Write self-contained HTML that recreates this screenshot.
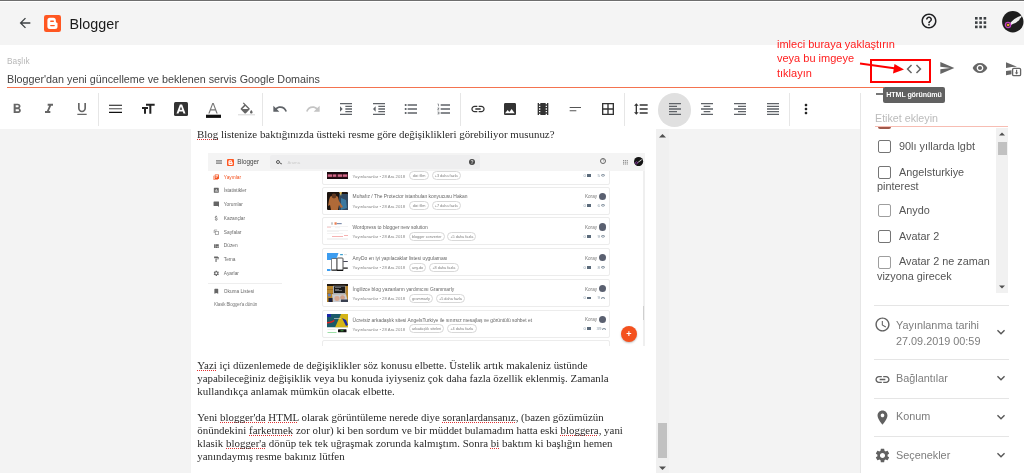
<!DOCTYPE html>
<html><head><meta charset="utf-8">
<style>
*{margin:0;padding:0;box-sizing:border-box}
html,body{width:1024px;height:473px;overflow:hidden;background:#fff;font-family:"Liberation Sans",sans-serif;position:relative}
.a{position:absolute}
svg{display:block;position:absolute}
.ic{fill:#616161}
.t{white-space:nowrap;position:absolute}
</style></head><body><div id="root" style="position:absolute;left:0;top:0;width:1024px;height:473px;will-change:transform">
<!-- top border -->
<div class="a" style="left:0;top:0;width:1024px;height:1px;background:#6e6e6e"></div>
<div class="a" style="left:0;top:1px;width:1024px;height:1px;background:#fff"></div>
<!-- header -->
<div class="a" style="left:0;top:2px;width:1024px;height:42.5px;background:#f4f4f4"></div>
<svg style="left:17px;top:14.5px" width="16" height="16" viewBox="0 0 24 24"><path fill="#3c4043" d="M20 11H7.83l5.59-5.59L12 4l-8 8 8 8 1.41-1.41L7.83 13H20v-2z"/></svg>
<svg style="left:44.3px;top:14.8px" width="17" height="17" viewBox="0 0 17 17"><rect width="17" height="17" rx="2.2" fill="#ff5722"/><path fill="#fff" d="M5.9 2.8H9.3a2.5 2.5 0 0 1 2.5 2.5V6.3a1.7 1.7 0 0 0 1.7 1.7V11.5a2.5 2.5 0 0 1 -2.5 2.5H5.9a2.5 2.5 0 0 1 -2.5 -2.5V5.3a2.5 2.5 0 0 1 2.5 -2.5z"/><rect x="6.1" y="5.5" width="3.9" height="1.4" rx=".7" fill="#ff5722"/><rect x="6.1" y="9.9" width="4.8" height="1.4" rx=".7" fill="#ff5722"/></svg>
<div class="t" style="left:69.5px;top:13.6px;font-size:14.35px;color:#1a1a1a;line-height:20px">Blogger</div>
<svg style="left:920px;top:11.5px" width="18" height="18" viewBox="0 0 24 24"><path fill="#202124" d="M11 18h2v-2h-2v2zm1-16C6.48 2 2 6.48 2 12s4.48 10 10 10 10-4.48 10-10S17.52 2 12 2zm0 18c-4.41 0-8-3.59-8-8s3.59-8 8-8 8 3.590 8 8-3.59 8-8 8zm0-14c-2.21 0-4 1.79-4 4h2c0-1.1.9-2 2-2s2 .9 2 2c0 2-3 1.75-3 5h2c0-2.25 3-2.5 3-5 0-2.21-1.79-4-4-4z"/></svg>
<svg style="left:974.5px;top:17px" width="12" height="12" viewBox="0 0 12 12"><g fill="#3c4043"><rect x="0" y="0" width="2.6" height="2.6"/><rect x="4.3" y="0" width="2.6" height="2.6"/><rect x="8.6" y="0" width="2.6" height="2.6"/><rect x="0" y="4.3" width="2.6" height="2.6"/><rect x="4.3" y="4.3" width="2.6" height="2.6"/><rect x="8.6" y="4.3" width="2.6" height="2.6"/><rect x="0" y="8.6" width="2.6" height="2.6"/><rect x="4.3" y="8.6" width="2.6" height="2.6"/><rect x="8.6" y="8.6" width="2.6" height="2.6"/></g></svg>
<svg style="left:1002px;top:11.3px" width="22" height="22" viewBox="0 0 22 22"><circle cx="10.8" cy="10.7" r="10.7" fill="#1e1e1e"/><path fill="#eee" d="M7.5 13C10 9.5 14 6 20 4.2 19.5 6 18.8 7 17.5 8 18 8.5 17 9.5 15.5 10.3 15.5 11 14 11.8 12 12.5 10.5 13.2 9 14 8.3 14.8z"/><circle cx="6" cy="14" r="2.6" fill="none" stroke="#c040c0" stroke-width="1.3"/><circle cx="6" cy="14" r="1.3" fill="#f0c020"/><circle cx="5.8" cy="14" r=".6" fill="#e02020"/></svg>
<!-- title -->
<div class="t" style="left:7px;top:55.5px;font-size:8.3px;color:#b8b8b8">Başlık</div>
<div class="t" style="left:7px;top:72.8px;font-size:10.75px;color:#444">Blogger'dan yeni güncelleme ve beklenen servis Google Domains</div>
<div class="a" style="left:7px;top:87px;width:877px;height:1px;background:#f4734f"></div>

<!-- toolbar -->
<svg style="left:8.5px;top:101px" width="16" height="16" viewBox="0 0 24 24"><path fill="#666" d="M15.6 10.79c.97-.67 1.65-1.77 1.65-2.79 0-2.26-1.75-4-4-4H7v14h7.04c2.09 0 3.71-1.7 3.71-3.79 0-1.52-.86-2.82-2.15-3.42zM10 6.5h3c.83 0 1.5.67 1.5 1.5s-.67 1.5-1.5 1.5h-3v-3zm3.5 9H10v-3h3.5c.83 0 1.5.67 1.5 1.5s-.67 1.5-1.5 1.5z"/></svg>
<svg style="left:41px;top:101px" width="16" height="16" viewBox="0 0 24 24"><path fill="#666" d="M10 4v3h2.21l-3.42 8H6v3h8v-3h-2.21l3.42-8H18V4z"/></svg>
<svg style="left:74px;top:101px" width="16" height="16" viewBox="0 0 24 24"><path fill="#666" d="M12 17c3.31 0 6-2.69 6-6V3h-2.5v8c0 1.93-1.57 3.5-3.5 3.5S8.5 12.93 8.5 11V3H6v8c0 3.31 2.69 6 6 6zm-7 2v2h14v-2H5z"/></svg>
<div class="a" style="left:98px;top:93px;width:1px;height:33px;background:#e6e6e6"></div>
<svg style="left:104px;top:101px" width="24" height="16" viewBox="0 0 24 16"><path fill="#111" d="M5 3.7h13v1.1H5zM5 10.8h13v1.1H5z"/><path fill="#555" d="M5 7.2h13v1.1H5z"/></svg>
<svg style="left:139.5px;top:101px" width="16" height="16" viewBox="0 0 24 24"><path fill="#222" d="M9 4v3h5v12h3V7h5V4H9zm-6 8h3v7h3v-7h3V9H3v3z"/></svg>
<div class="a" style="left:174px;top:102px;width:14px;height:14px;background:#333;border-radius:1.5px"></div>
<svg style="left:174px;top:102px" width="14" height="14" viewBox="0 0 14 14"><path fill="#fff" d="M5.9 2.5h2.2l3.4 9h-2l-.7-2H5.2l-.7 2h-2zM5.8 7.8h2.4L7 4.4z"/></svg>
<svg style="left:205px;top:101px" width="16" height="18" viewBox="0 0 16 18"><path fill="#777" d="M7.3 2h1.4l4 10.5h-1.3l-1.1-3H5.7l-1.1 3H3.3zM6.1 8.3h3.8L8 3.3z"/><rect x="1" y="13.7" width="15" height="3.2" fill="#111"/></svg>
<svg style="left:238px;top:100px" width="18" height="18" viewBox="0 0 18 18"><path fill="#666" d="M11.5 8.2L5.7 2.4l-.9.9 1.5 1.5-3.4 3.4c-.4.4-.4 1 0 1.4l3.6 3.6c.2.2.4.3.7.3s.5-.1.7-.3l3.6-3.6c.4-.4.4-1 0-1.4zM4.3 8.9L7.3 5.9l3 3z"/><path fill="#666" d="M13.3 10s-1.3 1.4-1.3 2.3c0 .7.6 1.3 1.3 1.3s1.3-.6 1.3-1.3c0-.9-1.3-2.3-1.3-2.3z"/><rect x="0" y="14.3" width="17" height="1" fill="#d6d6d6"/></svg>
<div class="a" style="left:262px;top:93px;width:1px;height:33px;background:#e6e6e6"></div>
<svg style="left:272px;top:101px" width="16" height="16" viewBox="0 0 24 24"><path fill="#5f6368" d="M12.5 8c-2.65 0-5.05.99-6.9 2.6L2 7v9h9l-3.62-3.62c1.39-1.16 3.16-1.88 5.12-1.88 3.54 0 6.55 2.31 7.6 5.5l2.370-.78C21.08 11.03 17.15 8 12.5 8z"/></svg>
<svg style="left:304.5px;top:101px" width="16" height="16" viewBox="0 0 24 24"><path fill="#c4c4c4" d="M18.4 10.6C16.55 8.99 14.15 8 11.5 8c-4.65 0-8.58 3.03-9.960 7.22L3.9 16c1.05-3.19 4.05-5.5 7.6-5.5 1.95 0 3.73.72 5.12 1.88L13 16h9V7l-3.6 3.6z"/></svg>
<svg style="left:337.5px;top:101px" width="16" height="16" viewBox="0 0 24 24"><path fill="#5f6368" d="M3 21h18v-2H3v2zM3 8v8l4-4-4-4zm8 9h10v-2H11v2zM3 3v2h18V3H3zm8 6h10V7H11v2zm0 4h10v-2H11v2z"/></svg>
<svg style="left:370.5px;top:101px" width="16" height="16" viewBox="0 0 24 24"><path fill="#5f6368" d="M11 17h10v-2H11v2zm-8-5l4 4V8l-4 4zm0 9h18v-2H3v2zM3 3v2h18V3H3zm8 6h10V7H11v2zm0 4h10v-2H11v2z"/></svg>
<svg style="left:403px;top:101px" width="16" height="16" viewBox="0 0 24 24"><path fill="#5f6368" d="M4 10.5c-.83 0-1.5.67-1.5 1.5s.67 1.5 1.5 1.5 1.5-.67 1.5-1.5-.67-1.5-1.5-1.5zm0-6c-.83 0-1.5.67-1.5 1.5S3.17 7.5 4 7.5 5.5 6.830 5.5 6 4.83 4.5 4 4.5zm0 12c-.83 0-1.5.68-1.5 1.5s.68 1.5 1.5 1.5 1.5-.68 1.5-1.5-.67-1.5-1.5-1.5zM7 19h14v-2H7v2zm0-6h14v-2H7v2zm0-8v2h14V5H7z"/></svg>
<svg style="left:435.5px;top:101px" width="16" height="16" viewBox="0 0 24 24"><path fill="#5f6368" d="M2 17h2v.5H3v1h1v.5H2v1h3v-4H2v1zm1-9h1V4H2v1h1v3zm-1 3h1.8L2 13.1v.9h3v-1H3.2L5 10.9V10H2v1zm5-6v2h14V5H7zm0 14h14v-2H7v2zm0-6h14v-2H7v2z"/></svg>
<div class="a" style="left:460px;top:93px;width:1px;height:33px;background:#e6e6e6"></div>
<svg style="left:469.5px;top:101px" width="16" height="16" viewBox="0 0 24 24"><path fill="#333" d="M3.9 12c0-1.71 1.39-3.1 3.1-3.1h4V7H7c-2.76 0-5 2.24-5 5s2.24 5 5 5h4v-1.9H7c-1.71 0-3.1-1.39-3.1-3.1zM8 13h8v-2H8v2zm9-6h-4v1.9h4c1.71 0 3.1 1.39 3.1 3.1s-1.39 3.1-3.1 3.1h-4V17h4c2.760 0 5-2.24 5-5s-2.24-5-5-5z"/></svg>
<svg style="left:502px;top:101px" width="16" height="16" viewBox="0 0 24 24"><path fill="#333" d="M21 19V5c0-1.1-.9-2-2-2H5c-1.1 0-2 .9-2 2v14c0 1.1.9 2 2 2h14c1.1 0 2-.9 2-2z"/><path fill="#fff" d="M4.5 18.5l4-5 2.5 3 3.5-4.5 4.5 6.5z"/></svg>
<svg style="left:534.5px;top:101px" width="16" height="16" viewBox="0 0 24 24"><path fill="#333" d="M18 3v2h-2V3H8v2H6V3H4v18h2v-2h2v2h8v-2h2v2h2V3h-2zM8 17H6v-2h2v2zm0-4H6v-2h2v2zm0-4H6V7h2v2zm10 8h-2v-2h2v2zm0-4h-2v-2h2v2zm0-4h-2V7h2v2z"/></svg>
<svg style="left:567px;top:101px" width="16" height="16" viewBox="0 0 24 24"><path fill="#555" d="M4 9h17v1.5H4zM4 14h10v1.5H4z"/></svg>
<svg style="left:600px;top:101px" width="16" height="16" viewBox="0 0 24 24"><path fill="#333" d="M3 3v18h18V3H3zm8 16H5v-6h6v6zm0-8H5V5h6v6zm8 8h-6v-6h6v6zm0-8h-6V5h6v6z"/></svg>
<div class="a" style="left:624px;top:93px;width:1px;height:33px;background:#e6e6e6"></div>
<svg style="left:633px;top:101px" width="16" height="16" viewBox="0 0 24 24"><path fill="#333" d="M6 7h2.5L5 3.5 1.5 7H4v10H1.5L5 20.5 8.5 17H6V7zm4-2v2h12V5H10zm0 14h12v-2H10v2zm0-6h12v-2H10v2z"/></svg>
<div class="a" style="left:657.5px;top:93px;width:33.5px;height:33.5px;border-radius:50%;background:#e0e0e0"></div>
<svg style="left:666.5px;top:101px" width="16" height="16" viewBox="0 0 24 24"><path fill="#5f6368" d="M15 15H3v2h12v-2zm0-8H3v2h12V7zM3 13h18v-2H3v2zm0 8h18v-2H3v2zM3 3v2h18V3H3z"/></svg>
<svg style="left:699px;top:101px" width="16" height="16" viewBox="0 0 24 24"><path fill="#5f6368" d="M7 15v2h10v-2H7zm-4 6h18v-2H3v2zm0-8h18v-2H3v2zm4-6v2h10V7H7zM3 3v2h18V3H3z"/></svg>
<svg style="left:731.5px;top:101px" width="16" height="16" viewBox="0 0 24 24"><path fill="#5f6368" d="M3 21h18v-2H3v2zm6-4h12v-2H9v2zm-6-4h18v-2H3v2zm6-4h12V7H9v2zM3 3v2h18V3H3z"/></svg>
<svg style="left:765px;top:101px" width="16" height="16" viewBox="0 0 24 24"><path fill="#5f6368" d="M3 21h18v-2H3v2zm0-4h18v-2H3v2zm0-4h18v-2H3v2zm0-4h18V7H3v2zm0-6v2h18V3H3z"/></svg>
<div class="a" style="left:789px;top:93px;width:1px;height:33px;background:#e6e6e6"></div>
<svg style="left:798px;top:101px" width="16" height="16" viewBox="0 0 24 24"><path fill="#222" d="M12 8c1.1 0 2-.9 2-2s-.9-2-2-2-2 .9-2 2 .9 2 2 2zm0 2c-1.1 0-2 .9-2 2s.9 2 2 2 2-.9 2-2-.9-2-2-2zm0 6c-1.1 0-2 .9-2 2s.9 2 2 2 2-.9 2-2-.9-2-2-2z"/></svg>

<!-- content bg -->
<div class="a" style="left:0;top:129px;width:860px;height:344px;background:#f3f3f3"></div>
<div class="a" style="left:191px;top:129px;width:465px;height:344px;background:#fff"></div>
<div class="a" style="left:656px;top:129px;width:13px;height:344px;background:#f0f0f0"></div>

<!-- doc text -->
<style>.sp{text-decoration:underline dotted #e03030;text-decoration-thickness:1.1px;text-underline-offset:0.7px;text-decoration-skip-ink:none}
.doc{font-family:'Liberation Serif',serif;font-size:10.9px;line-height:13px;color:#2a2a2a}</style>
<div class="t doc" style="left:197px;top:127.5px"><span class="sp">Blog</span> listenize baktığınızda üstteki resme göre değişiklikleri görebiliyor musunuz?</div>
<div class="t doc" style="left:197.3px;top:358.8px"><span class="sp">Yazi</span> içi düzenlemede de değişiklikler söz konusu elbette. Üstelik artık makaleniz üstünde<br>yapabileceğiniz değişiklik veya bu konuda iyiyseniz çok daha fazla özellik eklenmiş. Zamanla<br>kullandıkça anlamak mümkün olacak elbette.<br><br>Yeni <span class="sp">blogger'da</span> <span class="sp">HTML</span> olarak görüntüleme nerede diye <span class="sp">soranlardansanız</span>, (bazen gözümüzün<br>önündekini <span class="sp">farketmek</span> zor olur) ki ben sordum ve bir müddet bulamadım hatta eski <span class="sp">bloggera</span>, yani<br>klasik <span class="sp">blogger'a</span> dönüp tek tek uğraşmak zorunda kalmıştım. Sonra <span class="sp">bi</span> baktım ki başlığın hemen<br>yanındaymış resme bakınız lütfen</div>
<!-- embedded screenshot -->
<div class="a" style="left:208px;top:153px;width:437px;height:193px;background:#fff;overflow:hidden">
<div class="a" style="left:114px;top:3.6px;width:288.3px;height:28px;border:1px solid #ececec;border-radius:2px;background:#fff"></div>
<svg style="left:119px;top:18.6px" width="21" height="7.5" viewBox="0 0 21 7.5"><rect width="21" height="7.5" fill="#1a0a10"/><rect y="2.2" width="21" height="3" fill="#5a2030"/><path d="M1 2.6h4v2.2H1zM6 2.6h3v2.2H6zM11 2.6h4v2.2h-4zM16 2.6h4v2.2h-4z" fill="#d06888"/></svg>
<div class="t" style="left:144.60000000000002px;top:20.5px;font-family:'Liberation Sans',sans-serif;font-size:4.25px;line-height:6px;color:#888">Yayınlananlar • 28 Ara 2018</div>
<div class="t" style="left:201.0px;top:18.1px;width:20.0px;height:9px;border:0.7px solid #d8d8d8;border-radius:5px;font-family:'Liberation Sans',sans-serif;font-size:3.8px;line-height:8px;color:#808080;text-align:center">dizi film</div>
<div class="t" style="left:223.6px;top:18.1px;width:29.1px;height:9px;border:0.7px solid #d8d8d8;border-radius:5px;font-family:'Liberation Sans',sans-serif;font-size:3.8px;line-height:8px;color:#808080;text-align:center">+3 daha fazla</div>
<div class="t" style="left:375.4px;top:19.9px;font-family:'Liberation Sans',sans-serif;font-size:4.4px;line-height:6px;color:#8a9aa8">0</div>
<div class="a" style="left:379px;top:21.2px;width:3.6px;height:2.8px;background:#5a6a7a"></div>
<div class="t" style="left:389.5px;top:19.9px;font-family:'Liberation Sans',sans-serif;font-size:4.4px;line-height:6px;color:#8a9aa8">5</div>
<svg style="left:392.7px;top:21.4px" width="4" height="2.6" viewBox="0 0 24 15"><path fill="#6a7a8a" d="M12 0C7 0 2.7 3.1 1 7.5 2.7 11.9 7 15 12 15s9.3-3.1 11-7.5C21.3 3.1 17 0 12 0zm0 12.5a5 5 0 1 1 0-10 5 5 0 0 1 0 10z"/></svg>
<div class="a" style="left:114px;top:33.6px;width:288.3px;height:28px;border:1px solid #ececec;border-radius:2px;background:#fff"></div>
<svg style="left:119px;top:38.8px" width="21" height="18" viewBox="0 0 21 18"><rect width="21" height="18" rx="1" fill="#1c1410"/><rect x="12" y="2" width="9" height="16" fill="#304860"/><path d="M14 6l5 2 1 8-6 2z" fill="#3a78a0"/><path d="M3 5c2-2 6-2 8 0l1 4c1 2 3 4 4 6l-2 1-2-3-1 5H4l-1-5-2 1 1-6z" fill="#b06a38"/><circle cx="7" cy="4" r="2.4" fill="#603820"/><path d="M12 0h3l-1 4z" fill="#e0c060"/></svg>
<div class="t" style="left:144.60000000000002px;top:41.3px;font-family:'Liberation Sans',sans-serif;font-size:4.9px;line-height:6px;color:#666">Muhafız / The Protector istanbulan konyucusu Hakan</div>
<div class="t" style="left:144.60000000000002px;top:50.5px;font-family:'Liberation Sans',sans-serif;font-size:4.25px;line-height:6px;color:#888">Yayınlananlar • 28 Ara 2018</div>
<div class="t" style="left:201.0px;top:48.1px;width:20.0px;height:9px;border:0.7px solid #d8d8d8;border-radius:5px;font-family:'Liberation Sans',sans-serif;font-size:3.8px;line-height:8px;color:#808080;text-align:center">dizi film</div>
<div class="t" style="left:223.6px;top:48.1px;width:29.1px;height:9px;border:0.7px solid #d8d8d8;border-radius:5px;font-family:'Liberation Sans',sans-serif;font-size:3.8px;line-height:8px;color:#808080;text-align:center">+7 daha fazla</div>
<div class="t" style="left:377px;top:41.1px;font-family:'Liberation Sans',sans-serif;font-size:4.6px;line-height:6px;color:#777">Koray</div>
<div class="a" style="left:390.6px;top:39.6px;width:7.2px;height:7.2px;border-radius:50%;background:#5a6070"></div>
<div class="t" style="left:375.4px;top:49.9px;font-family:'Liberation Sans',sans-serif;font-size:4.4px;line-height:6px;color:#8a9aa8">0</div>
<div class="a" style="left:379px;top:51.2px;width:3.6px;height:2.8px;background:#5a6a7a"></div>
<div class="t" style="left:389.5px;top:49.9px;font-family:'Liberation Sans',sans-serif;font-size:4.4px;line-height:6px;color:#8a9aa8">6</div>
<svg style="left:392.7px;top:51.4px" width="4" height="2.6" viewBox="0 0 24 15"><path fill="#6a7a8a" d="M12 0C7 0 2.7 3.1 1 7.5 2.7 11.9 7 15 12 15s9.3-3.1 11-7.5C21.3 3.1 17 0 12 0zm0 12.5a5 5 0 1 1 0-10 5 5 0 0 1 0 10z"/></svg>
<div class="a" style="left:114px;top:64.4px;width:288.3px;height:28px;border:1px solid #ececec;border-radius:2px;background:#fff"></div>
<svg style="left:119px;top:68.5px" width="21" height="19.5" viewBox="0 0 21 19.5"><rect width="21" height="19.5" fill="#fff"/><rect x="4.5" y="0.3" width="1" height="2.4" fill="#999"/><rect x="7.5" y="0.3" width="2.2" height="2.4" fill="#f08050"/><rect x="9.7" y="1" width="5" height="1.2" fill="#8090b0"/><g fill="#e6e6e6"><rect x="0" y="4" width="21" height=".5"/><rect x="8" y="5.6" width="5" height=".5"/><rect x="0" y="8" width="21" height=".5"/><rect x="0" y="9.5" width="12" height=".5"/><rect x="0" y="11" width="16" height=".5"/><rect x="0" y="16" width="21" height=".5"/><rect x="0" y="17.5" width="21" height=".5"/></g><rect x="0" y="4.8" width="4" height=".6" fill="#f0a0a0"/><rect x="17" y="13" width="4" height=".6" fill="#f08080"/><rect x="5" y="14" width="11" height=".6" fill="#f08080"/></svg>
<div class="t" style="left:144.60000000000002px;top:72.1px;font-family:'Liberation Sans',sans-serif;font-size:4.9px;line-height:6px;color:#666">Wordpress to blogger new solution</div>
<div class="t" style="left:144.60000000000002px;top:81.3px;font-family:'Liberation Sans',sans-serif;font-size:4.25px;line-height:6px;color:#888">Yayınlananlar • 28 Ara 2018</div>
<div class="t" style="left:200.8px;top:78.9px;width:35.9px;height:9px;border:0.7px solid #d8d8d8;border-radius:5px;font-family:'Liberation Sans',sans-serif;font-size:3.8px;line-height:8px;color:#808080;text-align:center">blogger converter</div>
<div class="t" style="left:239.2px;top:78.9px;width:29.3px;height:9px;border:0.7px solid #d8d8d8;border-radius:5px;font-family:'Liberation Sans',sans-serif;font-size:3.8px;line-height:8px;color:#808080;text-align:center">+5 daha fazla</div>
<div class="t" style="left:377px;top:71.9px;font-family:'Liberation Sans',sans-serif;font-size:4.6px;line-height:6px;color:#777">Koray</div>
<div class="a" style="left:390.6px;top:70.4px;width:7.2px;height:7.2px;border-radius:50%;background:#5a6070"></div>
<div class="t" style="left:375.4px;top:80.7px;font-family:'Liberation Sans',sans-serif;font-size:4.4px;line-height:6px;color:#8a9aa8">0</div>
<div class="a" style="left:379px;top:82.0px;width:3.6px;height:2.8px;background:#5a6a7a"></div>
<div class="t" style="left:389.5px;top:80.7px;font-family:'Liberation Sans',sans-serif;font-size:4.4px;line-height:6px;color:#8a9aa8">9</div>
<svg style="left:392.7px;top:82.2px" width="4" height="2.6" viewBox="0 0 24 15"><path fill="#6a7a8a" d="M12 0C7 0 2.7 3.1 1 7.5 2.7 11.9 7 15 12 15s9.3-3.1 11-7.5C21.3 3.1 17 0 12 0zm0 12.5a5 5 0 1 1 0-10 5 5 0 0 1 0 10z"/></svg>
<div class="a" style="left:114px;top:95.3px;width:288.3px;height:28px;border:1px solid #ececec;border-radius:2px;background:#fff"></div>
<svg style="left:119px;top:100.0px" width="21" height="18" viewBox="0 0 21 18"><rect width="21" height="18" fill="#fff"/><path d="M0 0h11.5L9 7H0z" fill="#3d9df0"/><rect x="0" y="16" width="3.5" height="2" fill="#3d9df0"/><rect x="13" y="1" width="3" height="1.3" rx=".6" fill="#3aa0d0"/><rect x="17" y="1.2" width="3" height=".9" fill="#ddd"/><rect x="4.5" y="5.5" width="5.5" height="12" rx=".8" fill="#fff" stroke="#333" stroke-width=".6"/><rect x="10" y="5" width="6" height="13" rx=".8" fill="#fff" stroke="#222" stroke-width=".8"/><rect x="10" y="16.6" width="6" height="1.4" fill="#111"/><rect x="4.5" y="16.5" width="5.5" height="1" fill="#222"/><rect x="16.3" y="8" width="4.5" height=".9" fill="#334"/><rect x="16.3" y="14.5" width="4.5" height="1.2" fill="#111"/></svg>
<div class="t" style="left:144.60000000000002px;top:103.0px;font-family:'Liberation Sans',sans-serif;font-size:4.9px;line-height:6px;color:#666">AnyDo en iyi yapılacaklar listesi uygulaması</div>
<div class="t" style="left:144.60000000000002px;top:112.2px;font-family:'Liberation Sans',sans-serif;font-size:4.25px;line-height:6px;color:#888">Yayınlananlar • 28 Ara 2018</div>
<div class="t" style="left:200.8px;top:109.8px;width:17.7px;height:9px;border:0.7px solid #d8d8d8;border-radius:5px;font-family:'Liberation Sans',sans-serif;font-size:3.8px;line-height:8px;color:#808080;text-align:center">any.do</div>
<div class="t" style="left:221.0px;top:109.8px;width:29.7px;height:9px;border:0.7px solid #d8d8d8;border-radius:5px;font-family:'Liberation Sans',sans-serif;font-size:3.8px;line-height:8px;color:#808080;text-align:center">+8 daha fazla</div>
<div class="t" style="left:377px;top:102.8px;font-family:'Liberation Sans',sans-serif;font-size:4.6px;line-height:6px;color:#777">Koray</div>
<div class="a" style="left:390.6px;top:101.3px;width:7.2px;height:7.2px;border-radius:50%;background:#5a6070"></div>
<div class="t" style="left:375.4px;top:111.6px;font-family:'Liberation Sans',sans-serif;font-size:4.4px;line-height:6px;color:#8a9aa8">0</div>
<div class="a" style="left:379px;top:112.9px;width:3.6px;height:2.8px;background:#5a6a7a"></div>
<div class="t" style="left:389.5px;top:111.6px;font-family:'Liberation Sans',sans-serif;font-size:4.4px;line-height:6px;color:#8a9aa8">8</div>
<svg style="left:392.7px;top:113.1px" width="4" height="2.6" viewBox="0 0 24 15"><path fill="#6a7a8a" d="M12 0C7 0 2.7 3.1 1 7.5 2.7 11.9 7 15 12 15s9.3-3.1 11-7.5C21.3 3.1 17 0 12 0zm0 12.5a5 5 0 1 1 0-10 5 5 0 0 1 0 10z"/></svg>
<div class="a" style="left:114px;top:126.0px;width:288.3px;height:28px;border:1px solid #ececec;border-radius:2px;background:#fff"></div>
<svg style="left:119px;top:130.5px" width="21" height="18.5" viewBox="0 0 21 18.5"><rect width="21" height="18.5" rx="1" fill="#b8862e"/><rect width="21" height="2" fill="#201810"/><rect x="0" y="5" width="6" height=".6" fill="#8a6020"/><rect x="0" y="9" width="6" height=".6" fill="#8a6020"/><rect x="6" y="1.8" width="12.5" height="8.5" fill="#a8acb4"/><rect x="7" y="2.4" width="11" height="6.6" fill="#1a1a1a"/><g fill="#bbb"><rect x="8" y="3.5" width="6" height=".5"/><rect x="8" y="5" width="4" height=".5"/><rect x="8" y="6.5" width="7" height=".5"/></g><path d="M5 10.3h14l2 8.2H6z" fill="#c8ccd2"/><ellipse cx="10" cy="14.5" rx="2.6" ry="2.4" fill="#d8a890"/><ellipse cx="15.5" cy="13.5" rx="2.4" ry="2.2" fill="#d0a088"/><rect x="14" y="15.5" width="7" height="3" fill="#3a4050"/><circle cx="2.4" cy="11" r="1.6" fill="#6080c0"/><rect x="1.5" y="14" width="4" height="4" fill="#1a2040"/></svg>
<div class="t" style="left:144.60000000000002px;top:133.7px;font-family:'Liberation Sans',sans-serif;font-size:4.9px;line-height:6px;color:#666">İngilizce blog yazanların yardımcısı Grammarly</div>
<div class="t" style="left:144.60000000000002px;top:142.9px;font-family:'Liberation Sans',sans-serif;font-size:4.25px;line-height:6px;color:#888">Yayınlananlar • 28 Ara 2018</div>
<div class="t" style="left:200.8px;top:140.5px;width:24.4px;height:9px;border:0.7px solid #d8d8d8;border-radius:5px;font-family:'Liberation Sans',sans-serif;font-size:3.8px;line-height:8px;color:#808080;text-align:center">grammarly</div>
<div class="t" style="left:227.8px;top:140.5px;width:29.2px;height:9px;border:0.7px solid #d8d8d8;border-radius:5px;font-family:'Liberation Sans',sans-serif;font-size:3.8px;line-height:8px;color:#808080;text-align:center">+5 daha fazla</div>
<div class="t" style="left:377px;top:133.5px;font-family:'Liberation Sans',sans-serif;font-size:4.6px;line-height:6px;color:#777">Koray</div>
<div class="a" style="left:390.6px;top:132.0px;width:7.2px;height:7.2px;border-radius:50%;background:#5a6070"></div>
<div class="t" style="left:375.4px;top:142.3px;font-family:'Liberation Sans',sans-serif;font-size:4.4px;line-height:6px;color:#8a9aa8">0</div>
<div class="a" style="left:379px;top:143.6px;width:3.6px;height:2.8px;background:#5a6a7a"></div>
<div class="t" style="left:389.5px;top:142.3px;font-family:'Liberation Sans',sans-serif;font-size:4.4px;line-height:6px;color:#8a9aa8">9</div>
<svg style="left:392.7px;top:143.8px" width="4" height="2.6" viewBox="0 0 24 15"><path fill="#6a7a8a" d="M12 0C7 0 2.7 3.1 1 7.5 2.7 11.9 7 15 12 15s9.3-3.1 11-7.5C21.3 3.1 17 0 12 0zm0 12.5a5 5 0 1 1 0-10 5 5 0 0 1 0 10z"/></svg>
<div class="a" style="left:114px;top:156.8px;width:288.3px;height:28px;border:1px solid #ececec;border-radius:2px;background:#fff"></div>
<svg style="left:119px;top:161.0px" width="21" height="19.5" viewBox="0 0 21 19.5"><rect width="21" height="13.5" fill="#1a5a68"/><path d="M14 0h7v13.5H8z" fill="#d4b418"/><path d="M15 4l4 2 2 5-2 1z" fill="#1828a0"/><rect x="0" y="0" width="4" height="3" fill="#1828a8"/><path d="M0 8c3 0 6-1 7-2.5l.5 1.5C6 8.5 3 9.5 0 9.5z" fill="#e02020"/><rect x="7" y="4" width="7" height=".6" fill="#ddd"/><rect y="13.5" width="21" height="6" fill="#fff"/><rect x=".5" y="18" width="9" height=".7" fill="#70d080"/><rect x="11" y="15.3" width="8.5" height="3" rx=".4" fill="#111"/><rect x="13.5" y="16.3" width="3" height="1" fill="#40a040"/><rect x=".5" y="15" width="8" height=".4" fill="#ccc"/></svg>
<div class="t" style="left:144.60000000000002px;top:164.5px;font-family:'Liberation Sans',sans-serif;font-size:4.9px;line-height:6px;color:#666">Ücretsiz arkadaşlık sitesi AngelsTurkiye ile sınırsız mesajlaş ve görüntülü sohbet et</div>
<div class="t" style="left:144.60000000000002px;top:173.7px;font-family:'Liberation Sans',sans-serif;font-size:4.25px;line-height:6px;color:#888">Yayınlananlar • 28 Ara 2018</div>
<div class="t" style="left:200.8px;top:171.3px;width:35.5px;height:9px;border:0.7px solid #d8d8d8;border-radius:5px;font-family:'Liberation Sans',sans-serif;font-size:3.8px;line-height:8px;color:#808080;text-align:center">arkadaşlık siteleri</div>
<div class="t" style="left:239.0px;top:171.3px;width:29.5px;height:9px;border:0.7px solid #d8d8d8;border-radius:5px;font-family:'Liberation Sans',sans-serif;font-size:3.8px;line-height:8px;color:#808080;text-align:center">+4 daha fazla</div>
<div class="t" style="left:377px;top:164.3px;font-family:'Liberation Sans',sans-serif;font-size:4.6px;line-height:6px;color:#777">Koray</div>
<div class="a" style="left:390.6px;top:162.8px;width:7.2px;height:7.2px;border-radius:50%;background:#5a6070"></div>
<div class="t" style="left:375.4px;top:173.1px;font-family:'Liberation Sans',sans-serif;font-size:4.4px;line-height:6px;color:#8a9aa8">0</div>
<div class="a" style="left:379px;top:174.4px;width:3.6px;height:2.8px;background:#5a6a7a"></div>
<div class="t" style="left:388.5px;top:173.1px;font-family:'Liberation Sans',sans-serif;font-size:4.4px;line-height:6px;color:#8a9aa8">39</div>
<svg style="left:394.3px;top:174.6px" width="4" height="2.6" viewBox="0 0 24 15"><path fill="#6a7a8a" d="M12 0C7 0 2.7 3.1 1 7.5 2.7 11.9 7 15 12 15s9.3-3.1 11-7.5C21.3 3.1 17 0 12 0zm0 12.5a5 5 0 1 1 0-10 5 5 0 0 1 0 10z"/></svg>
<div class="a" style="left:114px;top:187.0px;width:288.3px;height:28px;border:1px solid #ececec;border-radius:2px;background:#fff"></div>
<div class="a" style="left:0;top:0;width:437px;height:17.7px;background:#f4f4f4"></div>
<div class="a" style="left:62px;top:2px;width:210px;height:14px;background:#eeeeef;border-radius:2px"></div>
<svg style="left:7.5px;top:7.2px" width="6" height="4" viewBox="0 0 6 4"><path fill="#777" d="M0 0h6v.8H0zM0 1.6h6v.8H0zM0 3.2h6v.8H0z"/></svg>
<div class="a" style="left:18.80000000000001px;top:5.6px;width:7.2px;height:7.4px;background:#ff5722;border-radius:1px"></div>
<svg style="left:18.80000000000001px;top:5.6px" width="7.2" height="7.4" viewBox="0 0 17 17"><path fill="#fff" d="M5.9 2.8H9.3a2.5 2.5 0 0 1 2.5 2.5V6.3a1.7 1.7 0 0 0 1.7 1.7V11.5a2.5 2.5 0 0 1 -2.5 2.5H5.9a2.5 2.5 0 0 1 -2.5 -2.5V5.3a2.5 2.5 0 0 1 2.5 -2.5z"/><rect x="6.1" y="5.5" width="3.9" height="1.6" fill="#ff5722"/><rect x="6.1" y="9.9" width="4.8" height="1.6" fill="#ff5722"/></svg>
<div class="t" style="left:29.30000000000001px;top:5px;font-family:'Liberation Sans',sans-serif;font-size:6.3px;line-height:8px;color:#444">Blogger</div>
<div class="a" style="left:68px;top:6.6px;width:4px;height:4px;border:0.9px solid #555;border-radius:50%"></div>
<div class="a" style="left:71.5px;top:10.2px;width:2px;height:0.9px;background:#555;transform:rotate(45deg)"></div>
<div class="t" style="left:79.39999999999998px;top:6.5px;font-family:'Liberation Sans',sans-serif;font-size:4.3px;line-height:6px;color:#ccc">Arama</div>
<div class="a" style="left:260.7px;top:5.7px;width:6.6px;height:6.6px;border-radius:50%;background:#484848"></div><div class="t" style="left:260.7px;top:5.7px;width:6.6px;height:6.6px;font-family:'Liberation Sans',sans-serif;font-size:5px;line-height:6.6px;text-align:center;color:#ddd;font-weight:bold">?</div>
<div class="a" style="left:392px;top:4.8px;width:6.4px;height:6.4px;border-radius:50%;border:0.8px solid #666"></div><div class="t" style="left:392px;top:4.8px;width:6.4px;height:6.4px;font-family:'Liberation Sans',sans-serif;font-size:4.4px;line-height:6.4px;text-align:center;color:#666">?</div>
<svg style="left:414.5px;top:7.2px" width="5.4" height="4.6" viewBox="0 0 6 5"><g fill="#888"><rect x="0" y="0" width="1.4" height="1.2"/><rect x="2.3" y="0" width="1.4" height="1.2"/><rect x="4.6" y="0" width="1.4" height="1.2"/><rect x="0" y="1.9" width="1.4" height="1.2"/><rect x="2.3" y="1.9" width="1.4" height="1.2"/><rect x="4.6" y="1.9" width="1.4" height="1.2"/><rect x="0" y="3.8" width="1.4" height="1.2"/><rect x="2.3" y="3.8" width="1.4" height="1.2"/><rect x="4.6" y="3.8" width="1.4" height="1.2"/></g></svg>
<svg style="left:426.4px;top:4.2px" width="9.2" height="9.2" viewBox="0 0 22 22"><circle cx="11" cy="11" r="11" fill="#151515"/><path fill="#ddd" d="M8 13.5C11 10 15 6.5 19.5 4.5 18.5 7 17 9 14 11 12 12.5 10 13.5 8.5 14.5z"/><circle cx="6" cy="14" r="2.6" fill="none" stroke="#a040c0" stroke-width="1.5"/></svg>
<svg style="left:4.800000000000011px;top:20.8px" width="6.6" height="6.6" viewBox="0 0 24 24"><path fill="#f4511e" d="M4 6H2v14c0 1.1.9 2 2 2h14v-2H4V6zm16-4H8c-1.1 0-2 .9-2 2v12c0 1.1.9 2 2 2h12c1.1 0 2-.9 2-2V4c0-1.1-.9-2-2-2zm-1 9H9V9h10v2zm-4 4H9v-2h6v2zm4-8H9V5h10v2z"/></svg>
<div class="t" style="left:15.800000000000011px;top:21.7px;font-family:'Liberation Sans',sans-serif;font-size:4.8px;line-height:6px;color:#f4511e">Yayınlar</div>
<svg style="left:4.800000000000011px;top:33.9px" width="6.6" height="6.6" viewBox="0 0 24 24"><path fill="#666" d="M19 3H5c-1.1 0-2 .9-2 2v14c0 1.1.9 2 2 2h14c1.1 0 2-.9 2-2V5c0-1.1-.9-2-2-2zM9 17H7v-7h2v7zm4 0h-2V7h2v10zm4 0h-2v-4h2v4z"/></svg>
<div class="t" style="left:15.800000000000011px;top:34.8px;font-family:'Liberation Sans',sans-serif;font-size:4.8px;line-height:6px;color:#6a6a6a">İstatistikler</div>
<svg style="left:4.800000000000011px;top:47.9px" width="6.6" height="6.6" viewBox="0 0 24 24"><path fill="#666" d="M21.99 4c0-1.1-.89-2-1.99-2H4c-1.1 0-2 .9-2 2v12c0 1.1.9 2 2 2h14l4 4-.01-18z"/></svg>
<div class="t" style="left:15.800000000000011px;top:48.8px;font-family:'Liberation Sans',sans-serif;font-size:4.8px;line-height:6px;color:#6a6a6a">Yorumlar</div>
<svg style="left:4.800000000000011px;top:61.9px" width="6.6" height="6.6" viewBox="0 0 24 24"><path fill="#666" d="M11.8 10.9c-2.27-.59-3-1.2-3-2.15 0-1.09 1.01-1.85 2.7-1.85 1.78 0 2.44.85 2.5 2.1h2.21c-.07-1.72-1.12-3.3-3.21-3.81V3h-3v2.16c-1.94.42-3.5 1.680-3.5 3.61 0 2.31 1.91 3.46 4.7 4.13 2.5.6 3 1.48 3 2.41 0 .69-.49 1.79-2.7 1.79-2.06 0-2.87-.92-2.98-2.1h-2.2c.12 2.19 1.76 3.42 3.68 3.83V21h3v-2.15c1.950-.37 3.5-1.5 3.5-3.55 0-2.84-2.43-3.81-4.7-4.4z"/></svg>
<div class="t" style="left:15.800000000000011px;top:62.8px;font-family:'Liberation Sans',sans-serif;font-size:4.8px;line-height:6px;color:#6a6a6a">Kazançlar</div>
<svg style="left:4.800000000000011px;top:75.8px" width="6.6" height="6.6" viewBox="0 0 24 24"><path fill="#666" d="M15 3H5c-1.1 0-2 .9-2 2v10h2V5h10V3zm4 4H9c-1.1 0-2 .9-2 2v10c0 1.1.9 2 2 2h10c1.1 0 2-.9 2-2V9c0-1.1-.9-2-2-2zm0 12H9V9h10v10z"/></svg>
<div class="t" style="left:15.800000000000011px;top:76.7px;font-family:'Liberation Sans',sans-serif;font-size:4.8px;line-height:6px;color:#6a6a6a">Sayfalar</div>
<svg style="left:4.800000000000011px;top:89.5px" width="6.6" height="6.6" viewBox="0 0 24 24"><path fill="#666" d="M10 18h5v-6h-5v6zm-6 0h5V5H4v13zm12 0h5v-6h-5v6zM10 5v6h11V5H10z"/></svg>
<div class="t" style="left:15.800000000000011px;top:90.4px;font-family:'Liberation Sans',sans-serif;font-size:4.8px;line-height:6px;color:#6a6a6a">Düzen</div>
<svg style="left:4.800000000000011px;top:103.2px" width="6.6" height="6.6" viewBox="0 0 24 24"><path fill="#666" d="M18 4V3c0-.55-.45-1-1-1H5c-.55 0-1 .45-1 1v4c0 .55.45 1 1 1h12c.55 0 1-.45 1-1V6h1v4H9v11c0 .55.45 1 1 1h2c.55 0 1-.45 1-1v-9h8V4h-3z"/></svg>
<div class="t" style="left:15.800000000000011px;top:104.1px;font-family:'Liberation Sans',sans-serif;font-size:4.8px;line-height:6px;color:#6a6a6a">Tema</div>
<svg style="left:4.800000000000011px;top:117.2px" width="6.6" height="6.6" viewBox="0 0 24 24"><path fill="#666" d="M19.14 12.94c.04-.3.06-.61.06-.94 0-.32-.02-.64-.07-.94l2.03-1.58c.18-.14.23-.41.12-.61l-1.92-3.32c-.12-.22-.37-.29-.59-.22l-2.39.96c-.5-.38-1.03-.7-1.62-.94l-.36-2.54c-.04-.24-.24-.41-.48-.41h-3.840c-.24 0-.43.17-.47.41l-.36 2.54c-.59.24-1.13.57-1.62.94l-2.39-.96c-.22-.08-.47 0-.59.22L2.74 8.87c-.12.21-.08.47.12.61l2.03 1.58c-.05.3-.09.63-.09.94s.02.64.07.94l-2.03 1.58c-.18.14-.23.41-.12.61l1.92 3.32c.12.22.37.29.59.22l2.39-.96c.5.38 1.03.7 1.62.94l.36 2.54c.05.24.24.41.48.41h3.84c.24 0 .44-.17.47-.41l.36-2.54c.59-.24 1.13-.56 1.62-.94l2.39.96c.22.08.47 0 .59-.22l1.92-3.32c.12-.22.07-.47-.12-.61l-2.01-1.58zM12 15.6c-1.98 0-3.6-1.62-3.6-3.6s1.62-3.6 3.6-3.6 3.6 1.62 3.6 3.6-1.62 3.6-3.6 3.6z"/></svg>
<div class="t" style="left:15.800000000000011px;top:118.1px;font-family:'Liberation Sans',sans-serif;font-size:4.8px;line-height:6px;color:#6a6a6a">Ayarlar</div>
<svg style="left:4.800000000000011px;top:135.4px" width="6.6" height="6.6" viewBox="0 0 24 24"><path fill="#666" d="M17 3H7c-1.1 0-1.99.9-1.99 2L5 21l7-3 7 3V5c0-1.1-.9-2-2-2z"/></svg>
<div class="t" style="left:15.800000000000011px;top:136.3px;font-family:'Liberation Sans',sans-serif;font-size:4.8px;line-height:6px;color:#6a6a6a">Okuma Listesi</div>
<div class="a" style="left:0;top:130.2px;width:74px;height:0.8px;background:#eee"></div>
<div class="t" style="left:6px;top:149.1px;font-family:'Liberation Sans',sans-serif;font-size:4.5px;letter-spacing:-0.12px;line-height:6px;color:#777">Klasik Blogger'a dönün</div>
<div class="a" style="left:435px;top:17.7px;width:1.5px;height:176px;background:#efefef"></div>
<div class="a" style="left:435.20000000000005px;top:153px;width:1px;height:14px;background:#cfcfcf"></div>
<div class="a" style="left:413px;top:173.3px;width:16px;height:16px;border-radius:50%;background:#f4511e;box-shadow:0 1px 2px rgba(0,0,0,.25)"></div>
<div class="t" style="left:413px;top:173.3px;width:16px;height:16px;font-family:'Liberation Sans',sans-serif;font-size:9px;line-height:16px;color:#fff;text-align:center;font-weight:bold">+</div>
</div>
<!-- doc scrollbar -->
<svg style="left:658px;top:133px" width="9" height="6" viewBox="0 0 9 6"><path fill="#505050" d="M4.5 1L8 4.5H1z"/></svg>
<div class="a" style="left:658px;top:423px;width:9.2px;height:35px;background:#c1c1c1"></div>
<svg style="left:658px;top:464.5px" width="9" height="6" viewBox="0 0 9 6"><path fill="#505050" d="M1 1.5h7L4.5 5z"/></svg>

<!-- sidebar -->
<div class="a" style="left:860px;top:88px;width:164px;height:385px;background:#fff"></div><div class="a" style="left:860px;top:93px;width:1px;height:380px;background:#e6e6e6"></div>

<!-- sidebar content -->
<div class="t" style="left:875px;top:111.8px;font-size:10.7px;color:#bbb">Etiket ekleyin</div>
<div class="a" style="left:875px;top:126px;width:133px;height:1px;background:#f7bdb3"></div>
<div class="a" style="left:878px;top:127px;width:13px;height:2px;background:#a0584a;border-radius:0 0 2px 2px"></div>
<div class="a" style="left:996px;top:128px;width:12px;height:165px;background:#f1f1f1"></div>
<svg style="left:998px;top:131px" width="8" height="6" viewBox="0 0 8 6"><path fill="#505050" d="M4 1.5L7 4.5H1z"/></svg>
<div class="a" style="left:997.5px;top:142px;width:9px;height:13px;background:#c1c1c1"></div>
<svg style="left:998px;top:284px" width="8" height="6" viewBox="0 0 8 6"><path fill="#505050" d="M1 1.5h6L4 4.5z"/></svg>
<div class="a" style="left:877.5px;top:140px;width:13px;height:13px;border:1.6px solid #757575;border-radius:2px"></div>
<div class="t" style="left:899px;top:140px;font-size:10.85px;color:#555">90lı yıllarda lgbt</div>
<div class="a" style="left:877.5px;top:166px;width:13px;height:13px;border:1.6px solid #757575;border-radius:2px"></div>
<div class="t" style="left:899px;top:166px;font-size:10.85px;color:#555">Angelsturkiye</div>
<div class="t" style="left:877px;top:180px;font-size:10.85px;color:#555">pinterest</div>
<div class="a" style="left:877.5px;top:204px;width:13px;height:13px;border:1.6px solid #9e9e9e;border-radius:2px"></div>
<div class="t" style="left:899px;top:204px;font-size:10.85px;color:#555">Anydo</div>
<div class="a" style="left:877.5px;top:230px;width:13px;height:13px;border:1.6px solid #757575;border-radius:2px"></div>
<div class="t" style="left:899px;top:230px;font-size:10.85px;color:#555">Avatar 2</div>
<div class="a" style="left:877.5px;top:256px;width:13px;height:13px;border:1.6px solid #9e9e9e;border-radius:2px"></div>
<div class="t" style="left:899px;top:255px;font-size:10.85px;color:#555">Avatar 2 ne zaman</div>
<div class="t" style="left:877px;top:270px;font-size:10.85px;color:#555">vizyona girecek</div>
<div class="a" style="left:874px;top:305px;width:135px;height:1px;background:#e5e5e5"></div>
<div class="a" style="left:874px;top:359px;width:135px;height:1px;background:#e5e5e5"></div>
<div class="a" style="left:874px;top:398px;width:135px;height:1px;background:#e5e5e5"></div>
<div class="a" style="left:874px;top:436px;width:135px;height:1px;background:#e5e5e5"></div>
<svg style="left:874px;top:316px" width="17" height="17" viewBox="0 0 24 24"><path fill="#616161" d="M11.99 2C6.47 2 2 6.48 2 12s4.47 10 9.990 10C17.52 22 22 17.52 22 12S17.52 2 11.99 2zM12 20c-4.42 0-8-3.58-8-8s3.58-8 8-8 8 3.58 8 8-3.58 8-8 8zm.5-13H11v6l5.25 3.15.75-1.230-4.5-2.67z"/></svg>
<div class="t" style="left:896px;top:318px;font-size:10.85px;color:#7d7d7d;line-height:15.5px">Yayınlanma tarihi<br>27.09.2019 00:59</div>
<svg style="left:993px;top:324px" width="16" height="16" viewBox="0 0 24 24"><path fill="#555" d="M16.59 8.59L12 13.17 7.41 8.59 6 10l6 6 6-6z"/></svg>
<svg style="left:874px;top:371px" width="17" height="17" viewBox="0 0 24 24"><path fill="#616161" d="M3.9 12c0-1.71 1.39-3.1 3.1-3.1h4V7H7c-2.76 0-5 2.24-5 5s2.24 5 5 5h4v-1.9H7c-1.71 0-3.1-1.39-3.1-3.1zM8 13h8v-2H8v2zm9-6h-4v1.9h4c1.71 0 3.1 1.39 3.1 3.1s-1.39 3.1-3.1 3.1h-4V17h4c2.76 0 5-2.24 5-5s-2.24-5-5-5z"/></svg>
<div class="t" style="left:896px;top:372px;font-size:10.85px;color:#7d7d7d">Bağlantılar</div>
<svg style="left:993px;top:370px" width="16" height="16" viewBox="0 0 24 24"><path fill="#555" d="M16.59 8.59L12 13.17 7.41 8.59 6 10l6 6 6-6z"/></svg>
<svg style="left:874px;top:409px" width="17" height="17" viewBox="0 0 24 24"><path fill="#616161" d="M12 2C8.13 2 5 5.13 5 9c0 5.25 7 13 7 13s7-7.75 7-13c0-3.87-3.13-7-7-7zm0 9.5c-1.38 0-2.5-1.12-2.5-2.5s1.12-2.5 2.5-2.5 2.5 1.12 2.5 2.5-1.12 2.5-2.5 2.5z"/></svg>
<div class="t" style="left:896px;top:410px;font-size:10.85px;color:#7d7d7d">Konum</div>
<svg style="left:993px;top:409px" width="16" height="16" viewBox="0 0 24 24"><path fill="#555" d="M16.59 8.59L12 13.17 7.41 8.59 6 10l6 6 6-6z"/></svg>
<svg style="left:874px;top:447px" width="17" height="17" viewBox="0 0 24 24"><path fill="#616161" d="M19.14 12.94c.04-.3.06-.61.06-.94 0-.32-.02-.64-.07-.94l2.03-1.58c.18-.14.23-.41.12-.61l-1.92-3.32c-.12-.22-.37-.29-.59-.22l-2.39.96c-.5-.38-1.03-.7-1.62-.94l-.36-2.54c-.04-.24-.24-.41-.48-.41h-3.84c-.24 0-.43.17-.47.41l-.36 2.54c-.59.24-1.13.57-1.62.94l-2.39-.96c-.22-.08-.47 0-.59.22L2.74 8.87c-.12.21-.08.47.12.61l2.03 1.58c-.05.3-.09.63-.09.94s.02.64.07.94l-2.03 1.58c-.18.14-.23.41-.12.61l1.92 3.32c.12.22.37.29.59.22l2.39-.96c.5.38 1.03.7 1.62.94l.36 2.54c.05.24.24.41.48.41h3.84c.24 0 .44-.17.47-.41l.36-2.54c.59-.24 1.13-.56 1.62-.94l2.39.96c.22.08.47 0 .59-.22l1.92-3.32c.12-.22.07-.47-.12-.61l-2.01-1.58zM12 15.6c-1.98 0-3.6-1.62-3.6-3.6s1.62-3.6 3.6-3.6 3.6 1.62 3.6 3.6-1.62 3.6-3.6 3.6z"/></svg>
<div class="t" style="left:896px;top:449px;font-size:10.85px;color:#7d7d7d">Seçenekler</div>
<svg style="left:993px;top:447px" width="16" height="16" viewBox="0 0 24 24"><path fill="#555" d="M16.59 8.59L12 13.17 7.41 8.59 6 10l6 6 6-6z"/></svg>

<!-- actions -->
<svg style="left:905px;top:60px" width="18" height="18" viewBox="0 0 24 24"><path fill="#666" d="M9.4 16.6L4.8 12l4.6-4.6L8 6l-6 6 6 6 1.4-1.4zm5.2 0l4.6-4.6-4.6-4.6L16 6l6 6-6 6-1.4-1.4z"/></svg>
<svg style="left:938.5px;top:60px" width="16" height="16" viewBox="0 0 24 24"><path fill="#666" d="M2.01 21L23 12 2.01 3 2 10l15 2-15 2z"/></svg>
<svg style="left:972px;top:60px" width="16" height="16" viewBox="0 0 24 24"><path fill="#666" d="M12 4.5C7 4.5 2.73 7.61 1 12c1.73 4.39 6 7.5 11 7.5s9.270-3.11 11-7.5c-1.73-4.39-6-7.5-11-7.5zM12 17c-2.76 0-5-2.24-5-5s2.24-5 5-5 5 2.24 5 5-2.24 5-5 5zm0-8c-1.66 0-3 1.34-3 3s1.34 3 3 3 3-1.34 3-3-1.34-3-3-3z"/></svg>
<svg style="left:1004px;top:60px" width="18" height="18" viewBox="0 0 18 18"><path fill="#666" d="M2 2.2l11 4.6-5.5.1L2 8zM2 15.2V11l5.5-.8v4z"/><rect x="8.6" y="8.3" width="8" height="7.4" rx="1.2" fill="#fff" stroke="#666" stroke-width="1.3"/><path fill="#666" d="M12 9.8h1.2v2.6h1.2l-1.8 2-1.8-2H12z"/></svg>
<!-- annotation -->
<div class="a" style="left:870px;top:59px;width:61px;height:24px;border:2px solid #ff0000"></div>
<svg style="left:855px;top:58px" width="55" height="16" viewBox="0 0 55 16"><path d="M5 5.5L41 10.5" stroke="#ff0000" stroke-width="2"/><path fill="#ff0000" d="M49 11.5L38 15.5 39.5 6z"/></svg>
<div class="t" style="left:777px;top:36.5px;font-size:11px;line-height:14.5px;color:#ff2020">imleci buraya yaklaştırın<br>veya bu imgeye<br>tıklayın</div>
<!-- tooltip -->
<div class="a" style="left:876px;top:93px;width:8px;height:2px;background:#777"></div>
<div class="t" style="left:883px;top:87px;width:62px;height:16px;background:#616161;border-radius:2px;color:#fff;font-size:7.1px;font-weight:bold;line-height:16px;text-align:center;letter-spacing:-0.1px">HTML görünümü</div>

</div></body></html>
